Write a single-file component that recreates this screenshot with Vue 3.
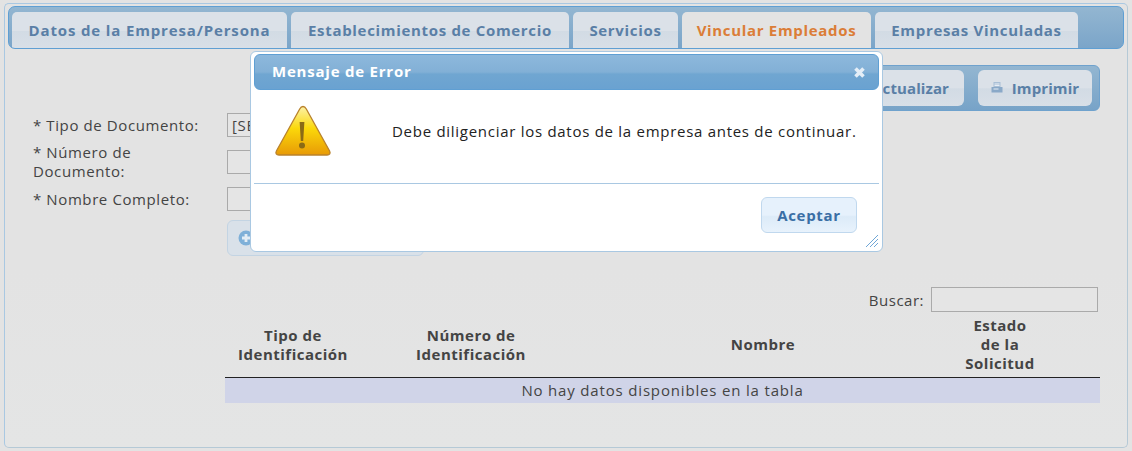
<script setup>
const tabs = [
  { label: 'Datos de la Empresa/Persona', w: 275, wide: true },
  { label: 'Establecimientos de Comercio', w: 278 },
  { label: 'Servicios', w: 105 },
  { label: 'Vincular Empleados', w: 189, active: true },
  { label: 'Empresas Vinculadas', w: 203 },
]
const cols = ['Tipo de\nIdentificación', 'Número de\nIdentificación', 'Nombre', 'Estado\nde la\nSolicitud', '']
</script>

<template>
  <div class="page">
    <div class="panel">
      <div class="tabbar">
        <div v-for="t in tabs" :key="t.label" class="tab" :class="{ active: t.active, wide: t.wide }" :style="{ width: t.w + 'px' }">{{ t.label }}</div>
      </div>
      <div class="toolbar-row">
        <div class="toolbar">
          <div class="tbtn update">Actualizar</div>
          <div class="tbtn print">
            <svg width="12" height="13" viewBox="0 0 12 13"><path d="M2.500 1h7v5h-7z" fill="#a9bfd6"/><path d="M.5 6h11v5.500H.5z" fill="#8aa9c8"/><path d="M3.500 3h5M3.500 4.500h5" stroke="#e8eef5" stroke-width="1"/><path d="M2.500 8h5" stroke="#e8eef5"/></svg>
            <span>Imprimir</span>
          </div>
        </div>
      </div>
      <div class="form">
        <div class="frow r1"><label>* Tipo de Documento:</label><div class="field select">[SELECCIONE]</div></div>
        <div class="frow r2"><label>* Número de<br>Documento:</label><div class="field"></div></div>
        <div class="frow r3"><label>* Nombre Completo:</label><div class="field"></div></div>
        <div class="add">
          <svg width="16" height="16" viewBox="0 0 16 16"><circle cx="8" cy="8" r="7.500" fill="#7fb0d8"/><path d="M8 4v8M4 8h8" stroke="#e3edf5" stroke-width="2.800"/></svg>
          <span>Agregar Empleado</span>
        </div>
      </div>
      <div class="search"><span>Buscar:</span><div class="sinput"></div></div>
      <div class="table">
        <div class="thead">
          <div v-for="(c, i) in cols" :key="i" class="th">{{ c }}</div>
        </div>
        <div class="empty">No hay datos disponibles en la tabla</div>
      </div>
    </div>

    <div class="modal">
      <div class="mtitle">
        <span>Mensaje de Error</span>
        <svg class="close" width="13" height="13" viewBox="0 0 13 13"><path d="M2.500 2.500l8 8M10.500 2.500l-8 8" stroke="#e4eef7" stroke-width="3.600"/></svg>
      </div>
      <div class="mbody">
        <svg class="warn" width="58" height="54" viewBox="0 0 58 54">
          <defs>
            <linearGradient id="wg" x1="0" y1="0" x2="0" y2="1">
              <stop offset="0" stop-color="#fdf2a8"/>
              <stop offset=".45" stop-color="#fbd80a"/>
              <stop offset="1" stop-color="#e89a06"/>
            </linearGradient>
          </defs>
          <path d="M29 2.500c1.500 0 2.500 1 3.300 2.500l23.300 42c1.200 2.300 0 4-2.500 4H4.900c-2.500 0-3.700-1.700-2.500-4l23.300-42c.8-1.500 1.800-2.500 3.300-2.500z" fill="url(#wg)" stroke="#b9822c" stroke-width="1.300"/>
          <path d="M25.600 18h4.800l-1.200 19h-2.400z" fill="#8a6a16"/>
          <circle cx="28" cy="41.500" r="3" fill="#8a6a16"/>
        </svg>
        <p>Debe diligenciar los datos de la empresa antes de continuar.</p>
      </div>
      <div class="mfoot"><div class="accept">Aceptar</div></div>
      <svg class="grip" width="14" height="14" viewBox="0 0 14 14"><path d="M1 13L13 1M5 13l8-8M9 13l4-4" stroke="#6fa6d6" stroke-width="1"/></svg>
    </div>
  </div>
</template>

<style>
html, body { margin: 0; background: #e3e3e3; }
</style>

<style scoped>
.page {
  position: relative;
  width: 1132px;
  height: 451px;
  overflow: hidden;
  background: #e3e3e3;
  font-family: "Open Sans", sans-serif;
  font-size: 15px;
  letter-spacing: .7px;
  color: #444;
  box-sizing: border-box;
  padding: 3px 4px;
}
.panel {
  box-sizing: border-box;
  height: 445px;
  border: 1px solid #b5c9d6;
  border-top-color: #a9c8e2;
  border-left-color: #a9c8e2;
  border-radius: 5px;
  padding: 2px 3px;
  background: linear-gradient(#e3e3e3 60%, #e4e5e5);
}
.tabbar {
  box-sizing: border-box;
  height: 43px;
  border: 1px solid #5f9fd3;
  border-radius: 7px;
  background: linear-gradient(#93b6d1, #7ba5c9);
  padding: 5px 0 0 3px;
  display: flex;
  gap: 4px;
  overflow: hidden;
}
.tab {
  box-sizing: border-box;
  height: 37px;
  border-radius: 5px 5px 0 0;
  background: linear-gradient(#dbe1e8 50%, #d2dbe4 52%, #d8dfe7);
  color: #5a7fa6;
  font-weight: 700;
  letter-spacing: .68px;
  text-align: center;
  line-height: 37px;
  white-space: nowrap;
}
.tab.wide { letter-spacing: .85px; }
.tab.active {
  background: #e3e3e3;
  color: #db7d37;
}
.toolbar-row {
  display: flex;
  justify-content: flex-end;
  padding: 16px 24px 0 0;
}
.toolbar {
  box-sizing: border-box;
  width: 400px;
  height: 46px;
  border: 1px solid #6fa2cd;
  border-radius: 6px;
  background: linear-gradient(#93b6d1, #77a3c8);
  display: flex;
  justify-content: flex-end;
  align-items: center;
  gap: 14px;
  padding-right: 7px;
}
.tbtn {
  box-sizing: border-box;
  height: 36px;
  border-radius: 6px;
  background: linear-gradient(#dbe1e8 50%, #d2dbe4 52%, #d8dfe7);
  color: #5a7fa6;
  font-weight: 700;
  letter-spacing: .1px;
  padding-bottom: 1px;
  display: flex;
  align-items: center;
  justify-content: center;
  gap: 9px;
}
.update { width: 125px; justify-content: flex-end; padding-right: 15px; }
.print { width: 114px; }
.form {
  box-sizing: border-box;
  padding-left: 25px;
  height: 174px;
}
.frow {
  display: flex;
  align-items: center;
}
.r1 { margin-top: 2px; margin-bottom: 6px; }
.r2 { margin-bottom: 6px; }
.r3 { margin-bottom: 9px; }
.frow label {
  width: 194px;
  flex: none;
  line-height: 19px;
  box-sizing: border-box;
  white-space: nowrap;
  letter-spacing: .6px;
}
.field {
  box-sizing: border-box;
  width: 200px;
  height: 24px;
  border: 1px solid #aaa;
  background: #e5e5e5;
  padding-left: 4px;
  line-height: 22px;
  overflow: hidden;
  white-space: nowrap;
}
.add {
  box-sizing: border-box;
  margin-left: 194px;
  width: 197px;
  height: 36px;
  border: 1px solid #c3d4e3;
  border-radius: 6px;
  background: #d9e1e9;
  display: flex;
  align-items: center;
  gap: 8px;
  padding-left: 10px;
  color: #9db5cc;
  font-weight: 700;
}
.search {
  display: flex;
  justify-content: flex-end;
  align-items: center;
  gap: 7px;
  padding: 0 26px 0 0;
  letter-spacing: .5px;
}
.sinput {
  box-sizing: border-box;
  width: 167px;
  height: 25px;
  border: 1px solid #aaa;
  background: #e5e5e5;
}
.table {
  margin: 4px 24px 0 217px;
}
.thead {
  display: grid;
  grid-template-columns: 136px 220px 364px 110px 45px;
  height: 57px;
  padding-bottom: 4px;
  border-bottom: 1px solid #222;
  align-items: center;
}
.th {
  white-space: pre-line;
  text-align: center;
  font-weight: 700;
  letter-spacing: .5px;
  line-height: 19px;
}
.empty {
  height: 25px;
  line-height: 25px;
  background: #d0d4e8;
  text-align: center;
  color: #444;
  letter-spacing: .83px;
}
.modal {
  position: absolute;
  left: 250px;
  top: 51px;
  box-sizing: border-box;
  width: 633px;
  height: 201px;
  background: #fff;
  border: 1px solid #a9c8e2;
  border-radius: 6px;
  padding: 2px 3px;
  color: #222;
}
.mtitle {
  box-sizing: border-box;
  height: 36px;
  border: 1px solid #5f9fd3;
  border-radius: 6px;
  background: linear-gradient(#8db8dc, #82b0d6 50%, #70a6d1 56%, #6aa2d1);
  color: #fff;
  font-weight: 700;
  letter-spacing: .78px;
  padding: 0 12px 2px 17px;
  display: flex;
  justify-content: space-between;
  align-items: center;
}
.close { margin-top: 2px; }
.mbody {
  height: 94px;
  box-sizing: border-box;
  border-bottom: 1px solid #a9c8e2;
  display: flex;
  padding: 14px 0 0 20px;
}
.warn { flex: none; }
.mbody p {
  margin: 17px 0 0 60px;
  white-space: nowrap;
  letter-spacing: .72px;
}
.mfoot {
  display: flex;
  justify-content: flex-end;
  padding: 13px 22px 0 0;
}
.accept {
  box-sizing: border-box;
  width: 96px;
  height: 36px;
  border: 1px solid #c0d8ee;
  border-radius: 6px;
  background: linear-gradient(#e6f1fc 50%, #dcebf8 55%, #e8f2fc);
  color: #3a6ea5;
  font-weight: 700;
  text-align: center;
  line-height: 34px;
}
.grip {
  position: absolute;
  right: 3px;
  bottom: 3px;
}
</style>
